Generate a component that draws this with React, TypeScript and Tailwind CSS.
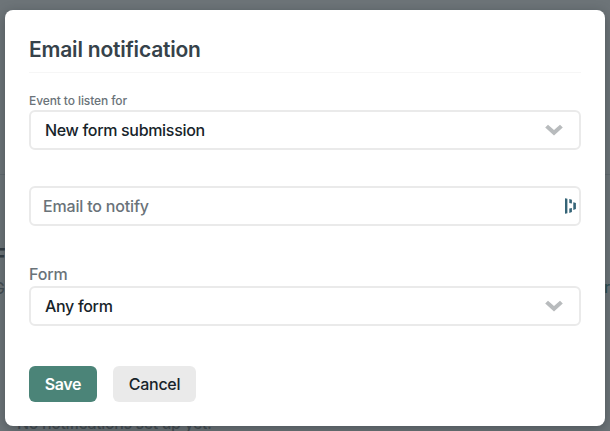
import React from "react";

function Chevron() {
  return (
    <svg width="18" height="12" viewBox="0 0 18 12" fill="#b8bbbd" aria-hidden="true">
      <path d="M0.2 3.4 3 0.7 9 5.9 15 0.7l2.8 2.7L9 11.4z" />
    </svg>
  );
}

function PasswordManagerMark() {
  return (
    <svg width="12" height="16" viewBox="0 0 12 16" fill="#356477" aria-hidden="true">
      <path d="M0 0.2l2.4.5v14.6L0 15.8zM4.3 1l2.6.8v3.8L4.3 5zM4.3 10.6l2.6-.7v4.2l-2.6.8zM8.3 4.3l2.6.8v6l-2.6.8z" />
    </svg>
  );
}

function Select({ value }: { value: string }) {
  return (
    <button
      type="button"
      className="flex h-10 w-full items-center justify-between rounded-md border-2 border-[#eaeaea] bg-white pr-4 pl-3.5 text-[16px] font-medium tracking-[-0.32px] text-[#17242a]"
    >
      <span>{value}</span>
      <Chevron />
    </button>
  );
}

function PageBehind() {
  return (
    <div className="absolute inset-0 overflow-hidden" aria-hidden="true">
      <div className="absolute top-[174px] w-full border-t border-[#626a6f]" />
      <span className="absolute top-[245px] -left-[7px] text-[22px] leading-none font-semibold text-[#333c42]">F</span>
      <span className="absolute top-[276px] -left-[7px] text-[16px] text-[#454e53]">G</span>
      <span className="absolute top-[275px] left-[604px] text-[16px] font-medium text-[#2f4f52]">r</span>
      <span className="absolute top-[411px] left-[17px] text-[16px] font-medium tracking-[-0.38px] whitespace-nowrap text-[#454d52]">
        No notifications set up yet.
      </span>
    </div>
  );
}

export default function App() {
  return (
    <div className="relative h-[431px] w-[610px] overflow-hidden bg-[#6d7478] px-[5px] pt-2.5 font-['Inter',sans-serif]">
      <PageBehind />
      <main className="relative h-[416px] rounded-lg bg-white px-6 pt-6 shadow-[0_3px_12px_rgba(20,30,35,0.35)]">
        <h1 className="h-[39px] border-b border-[#f6f6f6] text-[21px] leading-[31px] font-semibold tracking-[-0.2px] text-[#36424a]">
          Email notification
        </h1>
        <div className="mt-5">
          <div className="h-[17px] text-[12px] leading-4 font-medium tracking-[-0.1px] text-[#6a7379]">Event to listen for</div>
          <Select value="New form submission" />
        </div>
        <div className="mt-9 flex h-10 items-center rounded-md border-2 border-[#eaeaea] pr-[2px] pl-3">
          <input
            className="min-w-0 flex-1 text-[16px] font-medium tracking-[-0.18px] outline-none placeholder:text-[#6a7379]"
            placeholder="Email to notify"
          />
          <PasswordManagerMark />
        </div>
        <div className="mt-9">
          <div className="h-6 text-[16px] leading-6 font-medium tracking-[-0.1px] text-[#6a7379]">Form</div>
          <Select value="Any form" />
        </div>
        <div className="mt-10 flex gap-4">
          <button className="h-9 w-[68px] rounded-md bg-[#4b8478] text-[16px] font-semibold tracking-[-0.4px] text-white">Save</button>
          <button className="h-9 w-[83px] rounded-md bg-[#eaeaea] text-[16px] font-medium tracking-[-0.3px] text-[#17242a]">Cancel</button>
        </div>
      </main>
    </div>
  );
}
